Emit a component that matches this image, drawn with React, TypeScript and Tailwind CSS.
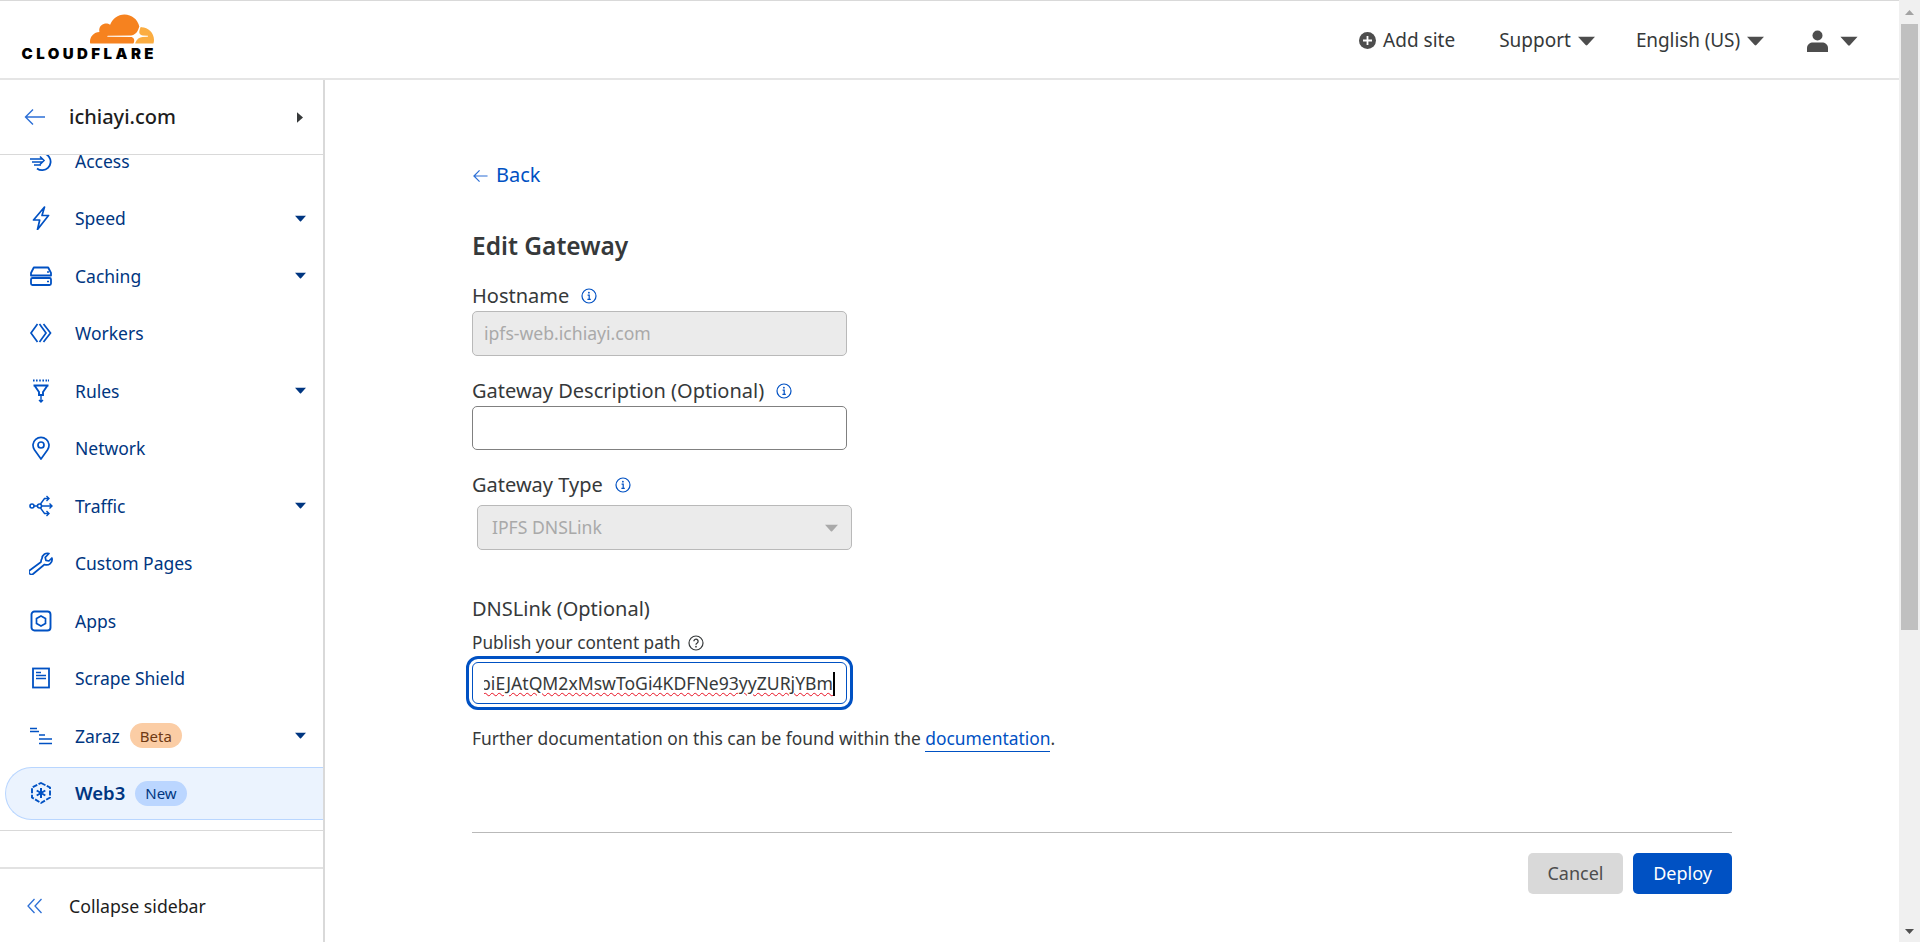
import React from "react";

const Caret = ({ className = "" }: { className?: string }) => (
  <svg viewBox="0 0 12 7" className={className} aria-hidden="true"><path d="M0 0.5h12L6.6 6.4a.8.8 0 0 1-1.2 0z" fill="currentColor" /></svg>
);

const Info = ({ className = "text-[#0051c3]" }: { className?: string }) => (
  <svg viewBox="0 0 16 16" className={`w-4 h-4 ${className}`} fill="none" stroke="currentColor" aria-hidden="true">
    <circle cx="8" cy="8" r="7" strokeWidth="1.2" />
    <path d="M6.6 7.2h1.6v4M6.4 11.3h3.4" strokeWidth="1.2" />
    <circle cx="7.9" cy="4.7" r="0.9" fill="currentColor" stroke="none" />
  </svg>
);

const Help = () => (
  <svg viewBox="0 0 16 16" className="w-4 h-4 text-[#36393a]" fill="none" stroke="currentColor" aria-hidden="true">
    <circle cx="8" cy="8" r="7" strokeWidth="1.2" />
    <path d="M5.9 6.3a2.1 2.1 0 1 1 3.3 1.7c-.8.5-1.2.9-1.2 1.7" strokeWidth="1.3" />
    <circle cx="8" cy="11.7" r="0.85" fill="currentColor" stroke="none" />
  </svg>
);

const Ico = ({ children }: { children: React.ReactNode }) => (
  <svg viewBox="0 0 24 24" className="w-6 h-6 text-[#0051c3]" fill="none" stroke="currentColor" strokeWidth="1.6" aria-hidden="true">{children}</svg>
);

const icons: Record<string, React.ReactNode> = {
  Access: (
    <Ico>
      <path d="M1 10h13M3 13h11M5 16h7M11 7.500l4 4-4 4" />
      <path d="M9.500 5A8.500 8.500 0 1 1 8 19.500" strokeWidth="1.800" />
    </Ico>
  ),
  Speed: (
    <Ico>
      <path d="M15.500 1 4.500 14h6.200L8.500 23.500l11-14h-6.500z" strokeLinejoin="round" strokeWidth="1.700" />
    </Ico>
  ),
  Caching: (
    <Ico>
      <path d="M4.800 3.500h14.400L22 9v2.500H2V9z" strokeLinejoin="round" strokeWidth="1.800" />
      <rect x="2" y="14" width="20" height="7" rx="1.500" strokeWidth="1.800" />
      <path d="M18 8h2M18 17.500h2" />
    </Ico>
  ),
  Workers: (
    <Ico>
      <path d="M8.500 3 2 12l6.500 9M10.500 21l6.500-9L10.500 3M14.500 3l7 9-7 9" strokeWidth="1.700" />
    </Ico>
  ),
  Rules: (
    <Ico>
      <path d="M4 1.500h1.600M7 1.500h1.600M10.200 1.500h1.600M13.400 1.500H15M16.500 1.500h1.600M19 1.500h1" strokeWidth="2" />
      <path d="M4.500 6.500h15M5.500 6.500 10 13v3h4v-3l4.500-6.500" strokeWidth="1.900" />
      <path d="M12 16v7M10 21l2 2 2-2" strokeWidth="1.400" />
    </Ico>
  ),
  Network: (
    <Ico>
      <path d="M12 23 5.400 13.800a8 8 0 1 1 13.200 0z" strokeWidth="1.700" strokeLinejoin="round" />
      <circle cx="12" cy="9" r="3" strokeWidth="1.700" />
    </Ico>
  ),
  Traffic: (
    <Ico>
      <circle cx="3" cy="12" r="2" />
      <circle cx="10.500" cy="12" r="2" />
      <path d="M5 12h3.500M12.500 12H23M20.500 9.500 23 12l-2.500 2.500M11.500 10 15.500 4.500h4.500M17.500 2l2.500 2.500L17.500 7M11.500 14l4 5.500h4.500M17.500 17l2.500 2.500-2.500 2.500" strokeWidth="1.400" />
    </Ico>
  ),
  "Custom Pages": (
    <Ico>
      <path d="M14.500 6.500a5.500 5.500 0 0 1 7-5l-3.800 3.800.7 3 3 .7 3-3a5.500 5.500 0 0 1-7.400 6.500L5.500 22a2.500 2.500 0 0 1-3.500-3.500l11.500-8.500a5.500 5.500 0 0 1 1-3.500z" strokeWidth="1.700" strokeLinejoin="round" transform="translate(-1.500 1)" />
    </Ico>
  ),
  Apps: (
    <Ico>
      <rect x="2.500" y="2.500" width="19" height="19" rx="3" strokeWidth="1.900" />
      <path d="m12 7 4.500 2.500v5L12 17l-4.500-2.500v-5z" strokeWidth="1.700" />
    </Ico>
  ),
  "Scrape Shield": (
    <Ico>
      <rect x="4" y="2.500" width="16" height="19" strokeWidth="1.800" />
      <path d="M7 6.500h5M7 9.500h10M7 12.500h10" strokeWidth="1.700" />
    </Ico>
  ),
  Zaraz: (
    <Ico>
      <path d="M1 4.500h7M1 7.500h9M10 11h6M10 15h13M10 19.500h13" strokeWidth="1.600" />
    </Ico>
  ),
  Web3: (
    <Ico>
      <path d="m12 2 9 4.500v10L12 22l-9-5.500v-10z" strokeWidth="1.900" strokeDasharray="5 1.500" />
      <path d="M12 7v10M7.700 9.500l8.600 5M16.300 9.500l-8.600 5" strokeWidth="2" />
    </Ico>
  ),
};

const items: { name: string; caret?: boolean; badge?: string; active?: boolean }[] = [
  { name: "Access" },
  { name: "Speed", caret: true },
  { name: "Caching", caret: true },
  { name: "Workers" },
  { name: "Rules", caret: true },
  { name: "Network" },
  { name: "Traffic", caret: true },
  { name: "Custom Pages" },
  { name: "Apps" },
  { name: "Scrape Shield" },
  { name: "Zaraz", caret: true, badge: "Beta" },
  { name: "Web3", badge: "New", active: true },
];

function NavItem({ name, caret, badge, active }: (typeof items)[number]) {
  return (
    <div className="h-[57.5px] flex items-center">
      <div
        className={
          active
            ? "h-[53px] w-full ml-[5px] pl-[22.500px] flex items-center bg-[#ebf3fe] border border-r-0 border-[#b9d6ff] rounded-l-[27px]"
            : "h-[53px] w-full pl-[28.500px] pr-[17px] flex items-center"
        }
      >
        {icons[name]}
        <span className={`ml-[22.500px] text-[#003681] ${active ? "text-[18.5px] font-semibold" : "text-[17.5px]"}`}>{name}</span>
        {badge && (
          <span
            className={`ml-[10px] h-[25px] px-[10px] rounded-full flex items-center text-[15px] ${
              badge === "Beta" ? "bg-[#fbcda5] text-[#6f3a14]" : "bg-[#bbd6ff] text-[#003681]"
            }`}
          >
            {badge}
          </span>
        )}
        {caret && <Caret className="ml-auto w-[11px] h-[7px] text-[#003681]" />}
      </div>
    </div>
  );
}

function Label({ children }: { children: React.ReactNode }) {
  return <div className="h-[25px] flex items-center gap-[12px] text-[20px] text-[#36393a]">{children}</div>;
}

export default function App() {
  return (
    <div className="h-[942px] w-[1920px] flex overflow-hidden bg-white font-['Noto_Sans',sans-serif]">
      <div className="w-[1899px] h-full flex flex-col">
        <header className="h-[80px] shrink-0 border-t border-b-2 border-t-[#d9d9d9] border-b-[#e5e5e5] flex items-center pl-[21px] pr-[41px] text-[#36393a]">
          <div className="flex flex-col items-end w-[136px] -mt-[5px]">
            <svg viewBox="0 6 24 11.600" className="w-[64px] h-[31px] mr-[3px]" aria-hidden="true">
              <path fill="#f6821f" d="M16.5088 16.8447c.1475-.5068.0908-.9707-.1553-1.3154-.2246-.3164-.6045-.499-1.0615-.5205l-8.6592-.1123a.1559.1559 0 0 1-.1333-.0713c-.0283-.042-.0351-.0986-.021-.1553.0278-.084.1123-.1484.2036-.1562l8.7359-.1123c1.0351-.0489 2.1601-.8868 2.5537-1.9136l.499-1.3013c.0215-.0561.0293-.1128.0147-.168-.5625-2.5463-2.835-4.4453-5.5499-4.4453-2.5039 0-4.6284 1.6177-5.3876 3.8614-.4927-.3658-1.1187-.5625-1.794-.499-1.2026.119-2.1665 1.083-2.2861 2.2856-.0283.31-.0069.6128.0635.894C1.5683 13.171 0 14.7754 0 16.752c0 .1748.0142.3515.0352.5273.0141.083.0844.1475.1689.1475h15.9814c.0909 0 .1758-.0645.2032-.1553l.12-.4268z" />
              <path fill="#fbad41" d="M19.2656 11.2813c-.0771 0-.1611 0-.2383.0112-.0566 0-.1054.0415-.127.0976l-.3378 1.1744c-.1475.5068-.0918.9707.1543 1.3164.2256.3164.6055.498 1.0625.5195l1.8437.1133c.0557 0 .1055.0263.1329.0703.0283.043.0351.1074.0214.1562-.0283.084-.1132.1485-.204.1553l-1.921.1123c-1.041.0488-2.1582.8867-2.5527 1.914l-.1406.3585c-.0283.0713.0215.1416.0986.1416h6.5977c.0771 0 .1474-.0489.169-.126.1122-.4082.1757-.837.1757-1.2803 0-2.6025-2.125-4.727-4.7344-4.727" />
            </svg>
            <div className="mt-[3px] h-[14px] leading-[14px] whitespace-nowrap font-['Inter',sans-serif] font-black text-[15px] tracking-[3.45px] text-black">CLOUDFLARE</div>
          </div>
          <div className="ml-auto flex items-center text-[19px] mt-[2px]">
            <svg viewBox="0 0 17 17" className="w-[17px] h-[17px]" aria-hidden="true">
              <circle cx="8.500" cy="8.500" r="8.500" fill="#4d4d4d" />
              <path d="M8.500 4v9M4 8.500h9" stroke="#fff" strokeWidth="1.800" />
            </svg>
            <span className="ml-[7px]">Add site</span>
            <span className="ml-[44px]">Support</span>
            <Caret className="ml-[7px] w-[17px] h-[10px] text-[#4d4d4d]" />
            <span className="ml-[41px] tracking-[-0.1px]">English (US)</span>
            <Caret className="ml-[7px] w-[17px] h-[10px] text-[#4d4d4d]" />
            <svg viewBox="0 0 21 22" className="ml-[43px] w-[21px] h-[22px]" aria-hidden="true">
              <circle cx="10.500" cy="5.500" r="5" fill="#4d4d4d" />
              <path d="M0 22v-4c0-3.500 3-5.500 6-5.500h9c3 0 6 2 6 5.500v4z" fill="#4d4d4d" />
            </svg>
            <Caret className="ml-[12px] w-[18px] h-[10px] text-[#4d4d4d]" />
          </div>
        </header>
        <div className="flex-1 flex min-h-0">
          <aside className="w-[325px] shrink-0 border-r-2 border-[#d9d9d9] flex flex-col">
            <div className="h-[75px] shrink-0 border-b border-[#d9d9d9] flex items-center pl-[24px] pr-[20px]">
              <svg viewBox="0 0 22 18" className="w-[22px] h-[18px] text-[#2c6fd6]" fill="none" stroke="currentColor" strokeWidth="1.400" aria-hidden="true">
                <path d="M21 9H1.500M9 1.500 1.500 9 9 16.500" />
              </svg>
              <span className="ml-[23px] text-[20px] font-medium text-[#1d1d1d]">ichiayi.com</span>
              <svg viewBox="0 0 7 12" className="ml-auto w-[6px] h-[11px]" aria-hidden="true"><path d="M0 0l7 6-7 6z" fill="#36393a" /></svg>
            </div>
            <div className="flex-1 min-h-0 overflow-hidden">
              <div className="-mt-[23px]">
                {items.map((it) => (
                  <NavItem key={it.name} {...it} />
                ))}
              </div>
            </div>
            <div className="h-[39px] shrink-0 border-t border-b-2 border-t-[#d9d9d9] border-b-[#e2e2e2]" />
            <div className="h-[73px] shrink-0 flex items-center pl-[27px] pt-[1px]">
              <svg viewBox="0 0 16 16" className="w-4 h-4 text-[#2c6fd6]" fill="none" stroke="currentColor" strokeWidth="1.300" aria-hidden="true">
                <path d="M7.500 1 1 8l6.500 7M14.500 1 8 8l6.500 7" />
              </svg>
              <span className="ml-[26px] text-[17.700px] text-[#1d1d1d]">Collapse sidebar</span>
            </div>
          </aside>
          <main className="flex-1 min-w-0 pl-[147px] pr-[167px]">
            <div className="mt-[80px] h-[30px] flex items-center gap-[8px] text-[#0051c3] text-[20px]">
              <svg viewBox="0 0 16 14" className="ml-[1px] w-[15px] h-[14px] mt-[2px] text-[#2c6fd6]" fill="none" stroke="currentColor" strokeWidth="1.300" aria-hidden="true">
                <path d="M15.500 7H1M7 1 1 7l6 6" />
              </svg>
              Back
            </div>
            <h1 className="mt-[40px] h-[32px] leading-[32px] text-[24.500px] font-semibold text-[#36393a]">Edit Gateway</h1>
            <div className="mt-[21px]"><Label>Hostname <Info /></Label></div>
            <div className="mt-[3px] h-[45px] w-[375px] border border-[#b9b9b9] rounded-[5px] bg-[#ebebeb] flex items-center px-[11px] text-[17.600px] text-[#a9a9a9]">ipfs-web.ichiayi.com</div>
            <div className="mt-[22px]"><Label>Gateway Description (Optional) <Info /></Label></div>
            <div className="mt-[3px] h-[44px] w-[375px] border border-[#808080] rounded-[5px] bg-white" />
            <div className="mt-[22px]"><Label>Gateway Type <Info /></Label></div>
            <div className="mt-[8px] ml-[5px] h-[45px] w-[375px] border border-[#b9b9b9] rounded-[5px] bg-[#ebebeb] flex items-center pl-[14px] pr-[13px] text-[17.600px] text-[#a9a9a9]">
              IPFS DNSLink
              <Caret className="ml-auto w-[13px] h-[8px] text-[#a9a9a9]" />
            </div>
            <div className="mt-[46px] h-[25px] flex items-center text-[20px] text-[#36393a]">DNSLink (Optional)</div>
            <div className="mt-[10px] h-[24px] flex items-center gap-[7px] text-[17.200px] text-[#36393a]">Publish your content path <Help /></div>
            <div className="mt-[7px] h-[42px] w-[375px] border border-[#0051c3] rounded-[6px] bg-white outline-[3px] outline-solid outline-[#0051c3] outline-offset-[3px] flex items-center pl-[11px] pr-[11px] pt-[1px] text-[17.600px] text-[#36393a] overflow-hidden">
              <span className="overflow-hidden flex justify-end w-full">
                <span className="whitespace-nowrap underline decoration-wavy decoration-[#e81123] decoration-1 underline-offset-[2px]">piEJAtQM2xMswToGi4KDFNe93yyZURjYBm</span>
              </span>
              <span className="w-[2px] h-[24px] bg-black shrink-0" />
            </div>
            <p className="mt-[22px] h-[25px] flex items-center text-[17.400px] text-[#36393a] whitespace-pre">
              Further documentation on this can be found within the <span className="text-[#0051c3] border-b border-[#0051c3]">documentation</span>.
            </p>
            <hr className="mt-[81px] border-0 border-t border-[#b9b9b9]" />
            <div className="mt-[20px] flex justify-end gap-[10px] text-[18px]">
              <div className="w-[95px] h-[41px] rounded-[5px] bg-[#d9d9d9] text-[#4d4d4d] flex items-center justify-center">Cancel</div>
              <div className="w-[99px] h-[41px] rounded-[5px] bg-[#0051c3] text-white flex items-center justify-center">Deploy</div>
            </div>
          </main>
        </div>
      </div>
      <div className="w-[21px] h-full shrink-0 bg-[#f0f0f0] flex flex-col items-center">
        <div className="h-[24px] flex items-center justify-center">
          <svg viewBox="0 0 9 5" className="w-[9px] h-[5px]" aria-hidden="true"><path d="M0 5h9L4.500 0z" fill="#a3a3a3" /></svg>
        </div>
        <div className="w-[17px] h-[606px] bg-[#c0c0c0]" />
        <div className="mt-auto h-[21px] flex items-center justify-center">
          <svg viewBox="0 0 9 5" className="w-[9px] h-[5px]" aria-hidden="true"><path d="M0 0h9L4.500 5z" fill="#505050" /></svg>
        </div>
      </div>
    </div>
  );
}
